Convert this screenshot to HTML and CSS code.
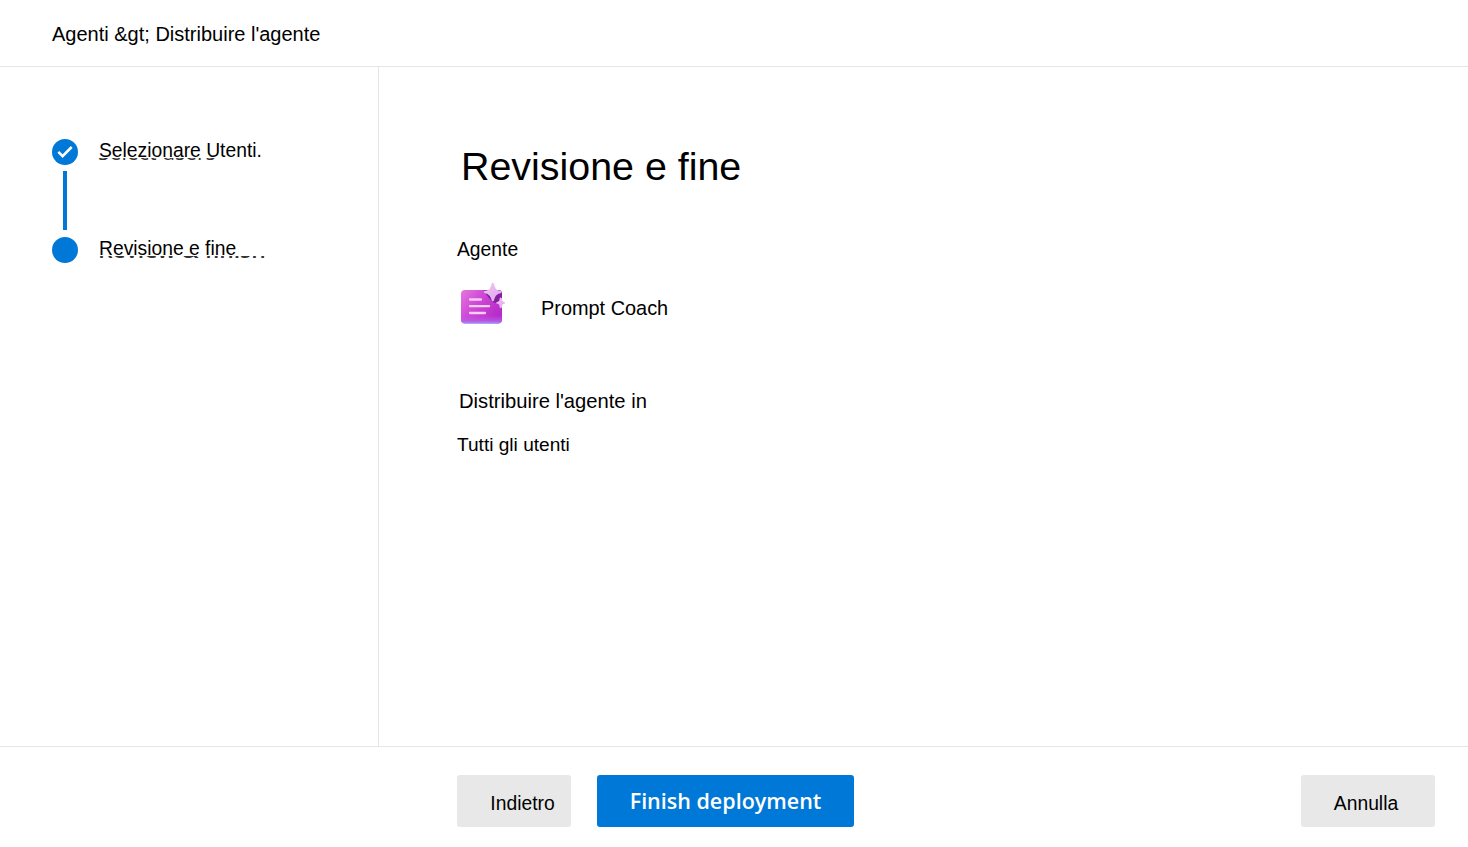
FILE: index.html
```
<!DOCTYPE html>
<html lang="it">
<head>
  <meta charset="UTF-8">
  <title>Distribuire l'agente</title>
  <link rel="stylesheet" href="styles.css">
</head>
<body>
  <header class="topbar">Agenti &amp;gt; Distribuire l'agente</header>

  <div class="content">
    <nav class="steps">
      <div class="step">
        <svg class="dot" viewBox="0 0 26 26">
          <circle cx="13" cy="13" r="13" fill="#0078d7"/>
          <path d="M6.300 12.800l4.300 4.300L19.700 8" fill="none" stroke="#fff" stroke-width="2.6"/>
        </svg>
        <span class="label">Selezionare Utenti.<span class="ghost"><span>Select users</span></span></span>
      </div>
      <div class="line"></div>
      <div class="step">
        <svg class="dot" viewBox="0 0 26 26">
          <circle cx="13" cy="13" r="13" fill="#0078d7"/>
        </svg>
        <span class="label current">Revisione e fine<span class="ghost"><span>Review &amp; finish</span></span></span>
      </div>
    </nav>

    <main class="review">
      <h1>Revisione e fine</h1>
      <h2>Agente</h2>
      <div class="agent">
        <svg class="agent-icon" width="48" height="44" viewBox="0 0 48 44">
          <defs>
            <linearGradient id="card" x1="0" y1="0" x2="1" y2="0.6">
              <stop offset="0" stop-color="#e478dd"/>
              <stop offset="0.45" stop-color="#cf48d6"/>
              <stop offset="1" stop-color="#b62cc8"/>
            </linearGradient>
            <linearGradient id="glow" x1="0" y1="0" x2="0" y2="1">
              <stop offset="0.75" stop-color="#c050ee" stop-opacity="0"/>
              <stop offset="0.92" stop-color="#b763ee" stop-opacity="0.7"/>
              <stop offset="1" stop-color="#92a0f5"/>
            </linearGradient>
            <linearGradient id="star" x1="0" y1="0" x2="1" y2="1">
              <stop offset="0" stop-color="#f3c3ee"/>
              <stop offset="1" stop-color="#dfa8f0"/>
            </linearGradient>
            <clipPath id="cardClip"><rect x="4" y="8" width="41" height="33.5" rx="4"/></clipPath>
          </defs>
          <rect x="4" y="8" width="41" height="33.5" rx="4" fill="url(#card)"/>
          <g clip-path="url(#cardClip)">
            <path d="M27 8h18v13c-3-1-4-1-5 0-3 0-4-1-5-1-2-4-5-5-8-12z" fill="#8420a0"/>
          </g>
          <rect x="4" y="8" width="41" height="33.5" rx="4" fill="url(#glow)"/>
          <path d="M13 17.5h11M13 24.2h19M13 31h15" stroke="#f7cdf4" stroke-width="2.3" stroke-linecap="round"/>
          <path transform="translate(0 .8)" d="M35.800 0Q37 0 37.600 3.500 38.400 6.600 41 7.400L44 8.300Q45.500 9.200 44 10.200L41 11.200Q38.400 12.500 37.600 15.500 37 18.800 35.800 18.800 34.600 18.800 34 15.500 33 12.500 30.500 11.200L27.500 10.200Q26 9.200 27.500 8.300L30.500 7.400Q33.200 6.600 34 3.500 34.600 0 35.800 0z" fill="url(#star)"/>
          <path d="M43.800 15.500q1.300 0 1.400 3.300.4.800 2.600 1.400.6.700 0 1.400-2.200.5-2.600 1.400-.2 3.300-1.400 3.300-1.300 0-1.500-3.300-.6-.9-2.700-1.400-.8-.7 0-1.400 2.100-.6 2.700-1.400.2-3.300 1.500-3.300z" fill="url(#star)"/>
        </svg>
        <span>Prompt Coach</span>
      </div>
      <h3>Distribuire l'agente in</h3>
      <p>Tutti gli utenti</p>
    </main>
  </div>

  <footer class="actions">
    <button class="back">Indietro</button>
    <button class="primary">Finish deployment</button>
    <button class="cancel">Annulla</button>
  </footer>
</body>
</html>
```

FILE: styles.css
```
* {
  box-sizing: border-box;
}
body {
  margin: 0;
  height: 847px;
  display: flex;
  flex-direction: column;
  font-family: "Liberation Sans", Arial, sans-serif;
  font-size: 20px;
  color: #000;
  background: #fff;
}
.topbar {
  height: 67px;
  padding-left: 52px;
  line-height: 69px;
  border-bottom: 1px solid #e5e5e5;
}
.content {
  flex: 1;
  display: flex;
}
.steps {
  width: 379px;
  padding: 72px 0 0 52px;
  border-right: 1px solid #e5e5e5;
}
.step {
  display: flex;
  align-items: center;
  gap: 21px;
  height: 26px;
}
.dot {
  width: 26px;
  height: 26px;
}
.line {
  width: 4px;
  height: 59px;
  margin: 6px 0 7px 11px;
  background: #0078d7;
}
.label {
  position: relative;
  font-size: 19.3px;
  line-height: 24px;
  padding-bottom: 2px;
}
/* lower edge of the english label showing under the translated one */
.ghost {
  position: absolute;
  left: -1px;
  top: 19px;
  height: 3px;
  overflow: hidden;
  white-space: nowrap;
  color: #333;
  font-family: "Open Sans", sans-serif;
  font-size: 21.2px;
  line-height: 22px;
}
.ghost span {
  display: block;
  margin-top: -17px;
}
.current .ghost {
  font-size: 22.8px;
  font-weight: 600;
}
.review {
  padding: 76px 0 0 78px;
}
h1, h2, h3, p {
  margin: 0;
  font-weight: 400;
}
h1 {
  padding-left: 4px;
  font-size: 39.4px;
  line-height: 46px;
}
h2 {
  margin-top: 50px;
  font-size: 19.3px;
  line-height: 22px;
}
.agent {
  display: flex;
  align-items: center;
  gap: 36px;
  margin-top: 21px;
}
.agent-icon {
  display: block;
}
.agent span {
  padding-top: 8px;
  font-size: 19.9px;
}
h3 {
  margin-top: 64px;
  padding-left: 2px;
  font-size: 20.2px;
  line-height: 23px;
}
p {
  margin-top: 21px;
  font-size: 19.1px;
  line-height: 22px;
}
.actions {
  display: flex;
  height: 101px;
  padding: 28px 33px 0 457px;
  border-top: 1px solid #e5e5e5;
}
button {
  height: 52px;
  padding: 5px 0 0;
  border: none;
  border-radius: 3px;
  background: #e8e8e8;
  color: #000;
  font-family: inherit;
  font-size: 19.3px;
}
.back {
  width: 114px;
  padding-left: 17px;
}
.primary {
  width: 257px;
  margin-left: 26px;
  padding: 0 0 2px;
  background: #0078d7;
  color: #fff;
  font-family: "Open Sans", sans-serif;
  font-size: 21.5px;
  font-weight: 600;
}
.cancel {
  width: 134px;
  margin-left: auto;
  padding-right: 4px;
}
```
